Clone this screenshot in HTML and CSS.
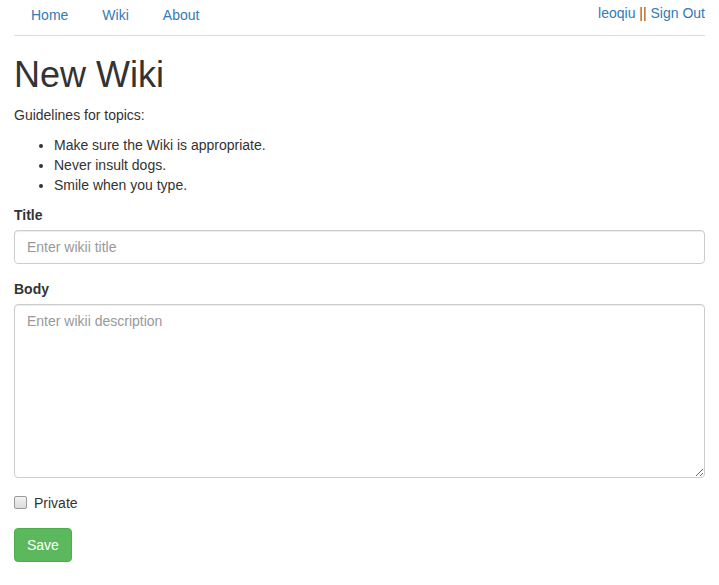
FILE: index.html
```html
<!DOCTYPE html>
<html>
<head>
<meta charset="utf-8">
<link rel="stylesheet" href="styles.css">
</head>
<body>
<div class="container">
  <header class="topbar">
    <ul class="nav">
      <li><a href="#">Home</a></li>
      <li><a href="#">Wiki</a></li>
      <li><a href="#">About</a></li>
    </ul>
    <div class="user"><a href="#">leoqiu</a> <span class="sep">||</span> <a href="#">Sign Out</a></div>
  </header>

  <h1>New Wiki</h1>
  <p class="intro">Guidelines for topics:</p>
  <ul class="guides">
    <li>Make sure the Wiki is appropriate.</li>
    <li>Never insult dogs.</li>
    <li>Smile when you type.</li>
  </ul>

  <form class="wiki-form">
    <div class="form-group">
      <label class="field-label" for="title">Title</label>
      <input id="title" class="form-control" type="text" placeholder="Enter wikii title">
    </div>
    <div class="form-group">
      <label class="field-label" for="body">Body</label>
      <textarea id="body" class="form-control" rows="8" placeholder="Enter wikii description"></textarea>
    </div>
    <div class="form-group">
      <label class="checkbox"><input type="checkbox"> Private</label>
    </div>
    <button type="button" class="btn-save">Save</button>
  </form>
</div>
</body>
</html>
```
FILE: styles.css
```css
* { box-sizing: border-box; }
html, body { margin: 0; padding: 0; }
body {
  font-family: "Liberation Sans", Arial, Helvetica, sans-serif;
  font-size: 14px;
  line-height: 20px;
  color: #333;
  background: #fff;
}
a { color: #337ab7; text-decoration: none; }
.container { padding: 0 14px; }

.topbar {
  display: flex;
  justify-content: space-between;
  align-items: flex-start;
  height: 36px;
  border-bottom: 1px solid #ddd;
}
.nav {
  list-style: none;
  margin: 0;
  padding: 0;
  display: flex;
}
.nav a {
  display: block;
  padding: 5px 17px 10px;
  line-height: 20px;
}
.user { padding-top: 3px; line-height: 20px; }
.user .sep { color: #6b5a3a; }

h1 {
  font-size: 36px;
  font-weight: 500;
  line-height: 1.1;
  margin: 19px 0 10px;
}
.intro { margin: 0 0 10px; }
.guides { margin: 10px 0 10px; padding-left: 40px; }

.form-group { margin-bottom: 15px; }
.field-label {
  display: inline-block;
  font-weight: bold;
  margin-bottom: 5px;
}
.form-control {
  display: block;
  width: 100%;
  height: 34px;
  padding: 6px 12px;
  font-family: inherit;
  font-size: 14px;
  line-height: 20px;
  color: #555;
  background: #fff;
  border: 1px solid #ccc;
  border-radius: 4px;
  box-shadow: inset 0 1px 1px rgba(0,0,0,.075);
  margin: 0;
}
.form-control::placeholder { color: #999; }
textarea.form-control { height: auto; resize: vertical; }

.checkbox {
  display: flex;
  align-items: center;
  gap: 7px;
  line-height: 20px;
  margin-top: 10px;
  margin-bottom: 10px;
}
.checkbox input {
  appearance: none;
  -webkit-appearance: none;
  width: 13px;
  height: 13px;
  margin: 0;
  border: 1px solid #9a9a9a;
  border-radius: 2px;
  background: linear-gradient(#f2f2f2, #dcdcdc);
}

.btn-save {
  display: inline-block;
  padding: 6px 12px;
  font-family: inherit;
  font-size: 14px;
  line-height: 20px;
  color: #fff;
  background: #5cb85c;
  border: 1px solid #4cae4c;
  border-radius: 4px;
}
```
